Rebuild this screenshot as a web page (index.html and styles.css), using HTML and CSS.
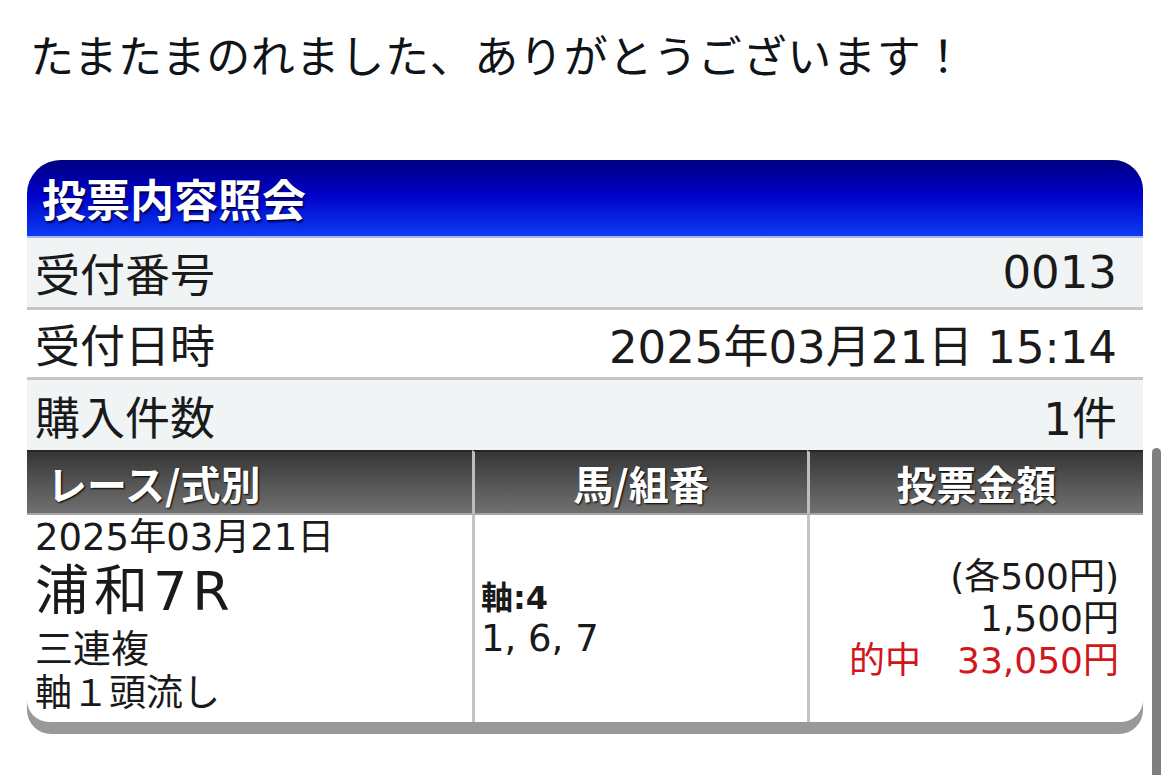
FILE: index.html
```html
<!DOCTYPE html>
<html lang="ja">
<head>
  <meta charset="UTF-8">
  <title>投票内容照会</title>
  <link rel="stylesheet" href="styles.css">
</head>
<body>
  <p class="post-text">たまたまのれました、ありがとうございます！</p>

  <div class="ticket">
    <div class="ticket-title">投票内容照会</div>

    <!-- receipt summary -->
    <div class="info-row">
      <span class="info-label">受付番号</span>
      <span class="info-value">0013</span>
    </div>
    <div class="info-row plain">
      <span class="info-label">受付日時</span>
      <span class="info-value">2025年03月21日 15:14</span>
    </div>
    <div class="info-row last">
      <span class="info-label">購入件数</span>
      <span class="info-value">1件</span>
    </div>

    <!-- bet detail -->
    <div class="bets">
      <div class="bets-head left">レース/式別</div>
      <div class="bets-head">馬/組番</div>
      <div class="bets-head">投票金額</div>

      <div class="bets-cell race">
        <div class="race-date">2025年03月21日</div>
        <div class="race-name">浦和7R</div>
        <div class="race-type">三連複</div>
        <div class="race-kind">軸１頭流し</div>
      </div>
      <div class="bets-cell horses">
        <div class="axis">軸:4</div>
        <div class="combo">1, 6, 7</div>
      </div>
      <div class="bets-cell amount">
        <div>(各500円)</div>
        <div>1,500円</div>
        <div class="hit">的中　33,050円</div>
      </div>
    </div>
  </div>

  <div class="scrollbar"></div>
</body>
</html>
```

FILE: styles.css
```css
body { margin: 0; background: #fff; color: #0f1419; font-family: "Noto Sans CJK JP", sans-serif; }

.post-text { margin: 0; padding: 22px 30px 0; font-size: 44px; line-height: 64px; letter-spacing: 0.7px; height: 160px; box-sizing: border-box; }

.ticket { width: 1116px; margin-left: 27px; background: #999; padding-bottom: 12px; border-radius: 34px 30px 24px 24px; overflow: hidden; }

.ticket-title { height: 78px; box-sizing: border-box; padding: 0 15px; display: flex; align-items: center; background: linear-gradient(#00007f, #0000c8 45%, #0a3cf4); border-bottom: 2px solid #a9b6e6; color: #fff; font-size: 44px; font-weight: bold; text-shadow: 1px 2px 2px #000040; }

.info-row { display: flex; justify-content: space-between; align-items: center; height: 72px; box-sizing: border-box; padding: 0 26px 0 8px; background: #f0f4f5; border-bottom: 3px solid #c6c6c6; font-size: 45px; color: #1a1a1a; }
.info-row.plain { height: 70px; background: #fff; }
.info-row.last { height: 70px; border-bottom: none; }
.info-value { font-family: "DejaVu Sans", "Noto Sans CJK JP", sans-serif; }

.bets { display: grid; grid-template-columns: 445px 335px 1fr; }
.bets-head { height: 65px; box-sizing: border-box; display: flex; align-items: center; justify-content: center; background: linear-gradient(#363636, #5a5a5a 60%, #707070); border-top: 2px solid #262626; border-bottom: 2px solid #a6a6a6; border-left: 3px solid #bdbdbd; color: #fff; font-size: 40px; font-weight: bold; text-shadow: 1px 1px 2px #000; }
.bets-head.left { justify-content: flex-start; padding-left: 20px; border-left: none; }

.bets-cell { height: 207px; box-sizing: border-box; background: #fff; border-left: 3px solid #c4c4c4; color: #1a1a1a; font-family: "DejaVu Sans", "Noto Sans CJK JP", sans-serif; }
.bets-cell.race { border-left: none; padding: 2px 8px 0; border-bottom-left-radius: 22px; }
.race-date { font-size: 37px; line-height: 42px; }
.race-name { font-size: 54px; line-height: 66px; letter-spacing: 5px; }
.race-type { font-size: 38px; line-height: 48px; }
.race-kind { font-size: 37px; line-height: 42px; }

.bets-cell.horses { display: flex; flex-direction: column; justify-content: center; padding: 0 6px; }
.axis { font-size: 32px; font-weight: bold; line-height: 40px; }
.combo { font-size: 37px; line-height: 42px; }

.bets-cell.amount { display: flex; flex-direction: column; justify-content: center; align-items: flex-end; padding: 0 24px 0 0; font-size: 36px; line-height: 42px; border-bottom-right-radius: 22px; }
.hit { color: #d0171c; }

.scrollbar { position: absolute; left: 1152px; top: 448px; width: 9px; height: 327px; background: #7f7f7f; border-radius: 5px 5px 0 0; }
```
